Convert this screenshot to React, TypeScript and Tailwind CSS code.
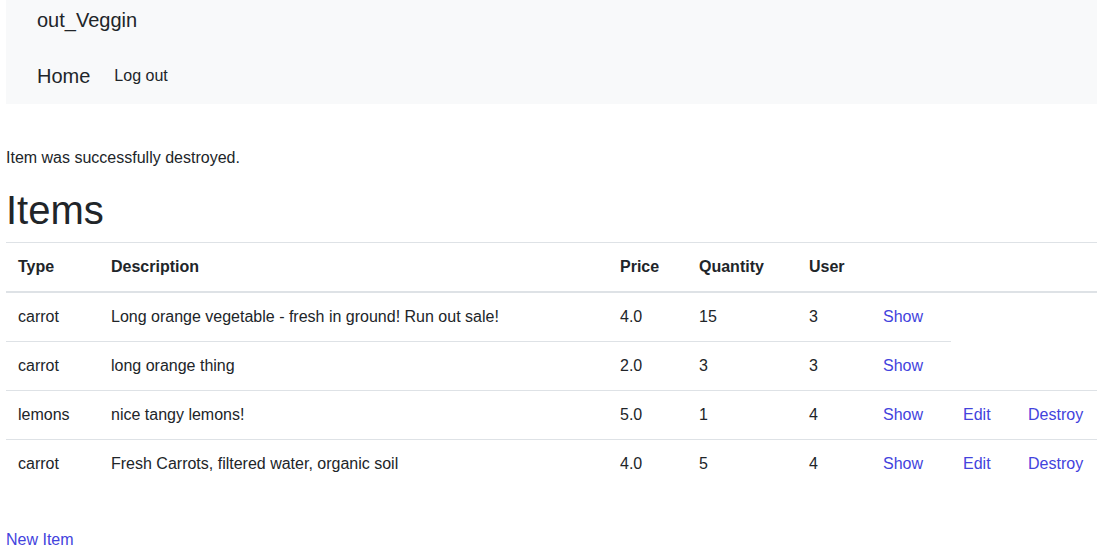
const items = [
  { type: 'carrot', description: 'Long orange vegetable - fresh in ground! Run out sale!', price: '4.0', quantity: '15', user: '3', owned: false },
  { type: 'carrot', description: 'long orange thing', price: '2.0', quantity: '3', user: '3', owned: false },
  { type: 'lemons', description: 'nice tangy lemons!', price: '5.0', quantity: '1', user: '4', owned: true },
  { type: 'carrot', description: 'Fresh Carrots, filtered water, organic soil', price: '4.0', quantity: '5', user: '4', owned: true },
];

const cell = 'px-3 py-3 border-t border-[#dee2e6] text-left align-top';
const link = 'text-[#4343dd] hover:underline';

export default function App() {
  return (
    <div className="min-h-screen bg-white pl-[6px] text-[16px] leading-6 text-[#212529] font-['Liberation_Sans',Arial,sans-serif]">
      {/* Navbar */}
      <nav className="h-[104px] bg-[#f8f9fa] pl-[31px] pt-[5px]">
        <a href="#" className="block text-[20px] leading-[30px]">out_Veggin</a>
        <div className="mt-[26px] flex items-center gap-[24px]">
          <a href="#" className="text-[20px] leading-[30px]">Home</a>
          <a href="#" className="text-[16px] leading-6">Log out</a>
        </div>
      </nav>

      <p className="mt-[42px]">Item was successfully destroyed.</p>

      <h1 className="mt-[16px] text-[40px] leading-[48px]">Items</h1>

      <table className="mt-[8px] w-[1091px] table-fixed border-collapse">
        <colgroup>
          <col className="w-[93px]" />
          <col className="w-[509px]" />
          <col className="w-[79px]" />
          <col className="w-[110px]" />
          <col className="w-[74px]" />
          <col className="w-[80px]" />
          <col className="w-[65px]" />
          <col className="w-[81px]" />
        </colgroup>
        <thead>
          <tr>
            {['Type', 'Description', 'Price', 'Quantity', 'User', '', '', ''].map((h, i) => (
              <th key={i} className={`${cell} border-b-2 font-bold`}>{h}</th>
            ))}
          </tr>
        </thead>
        <tbody>
          {items.map((it, i) => (
            <tr key={i}>
              <td className={cell}>{it.type}</td>
              <td className={cell}>{it.description}</td>
              <td className={cell}>{it.price}</td>
              <td className={cell}>{it.quantity}</td>
              <td className={cell}>{it.user}</td>
              <td className={cell}><a href="#" className={link}>Show</a></td>
              {it.owned && (
                <>
                  <td className={cell}><a href="#" className={link}>Edit</a></td>
                  <td className={cell}><a href="#" className={link}>Destroy</a></td>
                </>
              )}
            </tr>
          ))}
        </tbody>
      </table>

      <div className="mt-[40px]">
        <a href="#" className={link}>New Item</a>
      </div>
    </div>
  );
}
